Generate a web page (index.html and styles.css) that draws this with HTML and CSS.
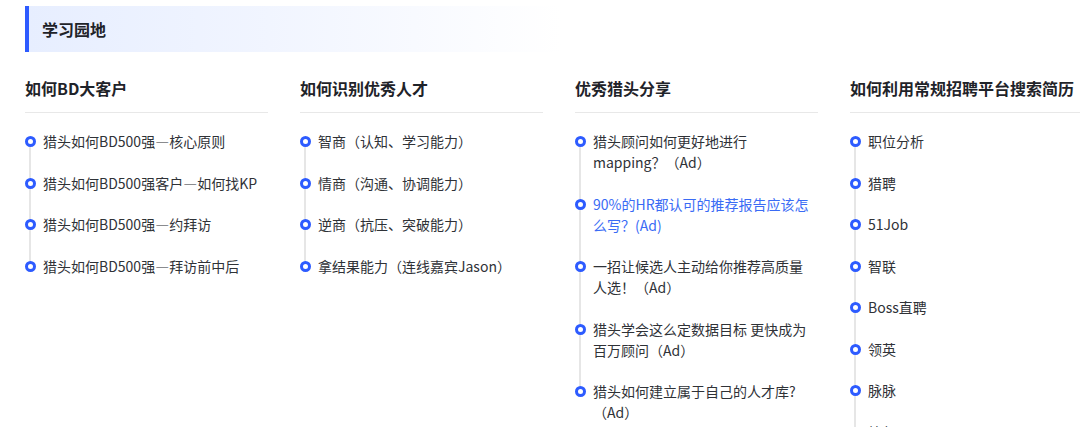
FILE: index.html
```html
<!DOCTYPE html>
<html lang="zh-CN">
<head>
<meta charset="utf-8">
<title>学习园地</title>
<link rel="stylesheet" href="styles.css">
</head>
<body>
<div class="page">
  <div class="banner"><span class="banner-title">学习园地</span></div>
  <div class="columns">
    <section class="col">
      <h3 class="col-title">如何BD大客户</h3>
      <ul class="timeline">
        <li>猎头如何BD500强—核心原则</li>
        <li>猎头如何BD500强客户—如何找KP</li>
        <li>猎头如何BD500强—约拜访</li>
        <li>猎头如何BD500强—拜访前中后</li>
      </ul>
    </section>
    <section class="col">
      <h3 class="col-title">如何识别优秀人才</h3>
      <ul class="timeline">
        <li>智商（认知、学习能力）</li>
        <li>情商（沟通、协调能力）</li>
        <li>逆商（抗压、突破能力）</li>
        <li>拿结果能力（连线嘉宾Jason）</li>
      </ul>
    </section>
    <section class="col">
      <h3 class="col-title">优秀猎头分享</h3>
      <ul class="timeline">
        <li>猎头顾问如何更好地进行mapping？（Ad）</li>
        <li class="active">90%的HR都认可的推荐报告应该怎么写？(Ad)</li>
        <li>一招让候选人主动给你推荐高质量人选！（Ad）</li>
        <li>猎头学会这么定数据目标 更快成为百万顾问（Ad）</li>
        <li>猎头如何建立属于自己的人才库?（Ad）</li>
      </ul>
    </section>
    <section class="col">
      <h3 class="col-title">如何利用常规招聘平台搜索简历</h3>
      <ul class="timeline">
        <li>职位分析</li>
        <li>猎聘</li>
        <li>51Job</li>
        <li>智联</li>
        <li>Boss直聘</li>
        <li>领英</li>
        <li>脉脉</li>
        <li>拉勾</li>
      </ul>
    </section>
  </div>
</div>
</body>
</html>
```

FILE: styles.css
```css
html, body {
  margin: 0;
  padding: 0;
  background: #ffffff;
}
body {
  font-family: "Noto Sans CJK SC", "Noto Sans", sans-serif;
  color: #333;
  overflow: hidden;
}
.page {
  padding: 6px 0 0 25px;
}
.banner {
  width: 536px;
  height: 46px;
  box-sizing: border-box;
  border-left: 4px solid #2d5bff;
  background: linear-gradient(90deg, #e7eeff 0%, #f1f5ff 45%, #ffffff 100%);
  display: flex;
  align-items: center;
  padding-left: 13px;
}
.banner-title {
  font-size: 16px;
  font-weight: 600;
  color: #1f2329;
}
.columns {
  display: flex;
  gap: 32px;
  margin-top: 24px;
  width: 1200px;
}
.col {
  width: 243px;
  flex: none;
}
.col-title {
  margin: 0;
  font-size: 16px;
  line-height: 24px;
  font-weight: 600;
  color: #1f2329;
  padding-bottom: 12px;
  border-bottom: 1px solid #e8e8e8;
  white-space: nowrap;
}
.timeline {
  list-style: none;
  margin: 18px 0 0;
  padding: 0;
  display: flex;
  flex-direction: column;
  gap: 20.5px;
}
.timeline li {
  position: relative;
  padding-left: 18px;
  width: 218px;
  font-size: 14px;
  line-height: 21px;
  color: #2f3237;
}
.timeline li::before {
  content: "";
  position: absolute;
  left: -0.5px;
  top: 5px;
  width: 11px;
  height: 11px;
  box-sizing: border-box;
  border: 3px solid #2d5bff;
  border-radius: 50%;
  background: #fff;
  z-index: 1;
}
.timeline li:not(:last-child)::after {
  content: "";
  position: absolute;
  left: 4px;
  top: 10px;
  width: 2px;
  height: calc(100% + 20.5px);
  background: #e6e6e6;
}
.timeline li.active {
  color: #3a6bf5;
}
```
